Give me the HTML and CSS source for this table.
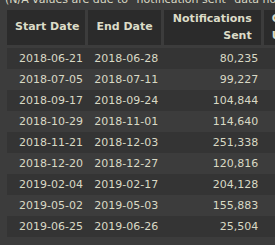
FILE: index.html
```html
<!DOCTYPE html>
<html>
<head>
<meta charset="utf-8">
<link rel="stylesheet" href="styles.css">
</head>
<body>
<div class="page">
  <p class="note">(N/A values are due to "notification sent" data not being available for older campaigns)</p>
  <table class="grid">
    <thead>
      <tr>
        <th class="c1">Start Date</th>
        <th class="c2">End Date</th>
        <th class="c3 num">Notifications Sent</th>
        <th class="c4">Clicked Users</th>
      </tr>
    </thead>
    <tbody>
      <tr><td>2018-06-21</td><td>2018-06-28</td><td>80,235</td><td>1,204</td></tr>
      <tr><td>2018-07-05</td><td>2018-07-11</td><td>99,227</td><td>1,387</td></tr>
      <tr><td>2018-09-17</td><td>2018-09-24</td><td>104,844</td><td>1,512</td></tr>
      <tr><td>2018-10-29</td><td>2018-11-01</td><td>114,640</td><td>1,633</td></tr>
      <tr><td>2018-11-21</td><td>2018-12-03</td><td>251,338</td><td>3,021</td></tr>
      <tr><td>2018-12-20</td><td>2018-12-27</td><td>120,816</td><td>1,710</td></tr>
      <tr><td>2019-02-04</td><td>2019-02-17</td><td>204,128</td><td>2,648</td></tr>
      <tr><td>2019-05-02</td><td>2019-05-03</td><td>155,883</td><td>2,103</td></tr>
      <tr><td>2019-06-25</td><td>2019-06-26</td><td>25,504</td><td>402</td></tr>
    </tbody>
  </table>
</div>
</body>
</html>
```

FILE: styles.css
```css
html, body {
  margin: 0;
  padding: 0;
  background: #3c3c3c;
  overflow: hidden;
}

body {
  font-family: "DejaVu Sans", Verdana, sans-serif;
  font-size: 11px;
  color: #d9d9c5;
}

.page {
  margin-top: -7px;
  padding-left: 5px;
  width: 400px;
}

.note {
  margin: 0 0 4px 0;
  line-height: 13px;
  white-space: nowrap;
}

.grid {
  margin-left: 2px;
  border-collapse: collapse;
}

.grid th {
  background: #2b2b2b;
  font-weight: bold;
  color: #dcdcc8;
  text-align: left;
  padding: 1px 8px;
  line-height: 16.5px;
  border-left: 3px solid #3c3c3c;
  border-bottom: 3px solid #3c3c3c;
  vertical-align: middle;
}

.grid th.c1 {
  border-left: 0;
  white-space: nowrap;
  padding-right: 6px;
}

.grid th.c2 {
  white-space: nowrap;
}

.grid th.c3 {
  text-align: right;
  width: 80px;
  padding-right: 9px;
}

.grid th.c4 {
  width: 60px;
}

.grid td {
  text-align: right;
  padding: 4px 4px;
  white-space: nowrap;
}

.grid tbody tr:nth-child(odd) {
  background: #343434;
}
```
